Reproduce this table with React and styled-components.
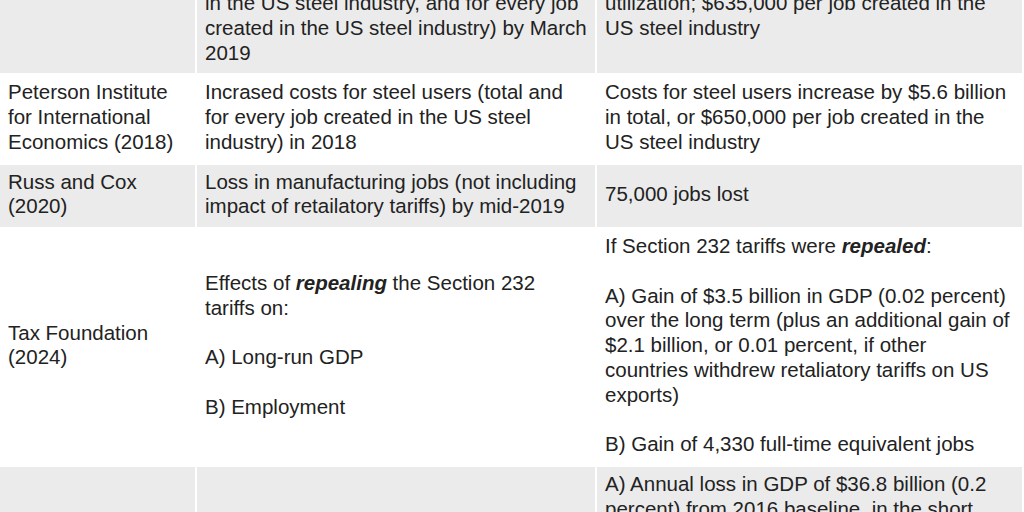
import React from "react";
import styled, { createGlobalStyle } from "styled-components";

const GlobalStyle = createGlobalStyle`
  html, body { margin: 0; padding: 0; background: #ffffff; }
  body { overflow: hidden; }
`;

const Viewport = styled.div`
  height: 512px;
  overflow: hidden;
`;

const Table = styled.div`
  display: grid;
  grid-template-columns: 195px 398px 425px;
  gap: 2px;
  width: 1022px;
  margin-top: ${(p) => p.$offset}px;
  font-family: "Liberation Sans", Arial, sans-serif;
  font-size: 20.5px;
  line-height: 24.75px;
  color: #222222;
`;

const Cell = styled.div`
  display: flex;
  flex-direction: column;
  justify-content: center;
  padding: 5px ${(p) => p.$padEnd}px 8px 8px;
  background: ${(p) => (p.$shaded ? "#ebebeb" : "#ffffff")};
`;

const Para = styled.p`
  margin: 0;
  & + & { margin-top: 24.75px; }
`;

const Stress = styled.em`
  font-weight: 700;
  font-style: italic;
`;

const rows = [
  {
    source: "Lincicome (2019)",
    measure: [
      <>
        Increase in costs for steel users (total, per ton of increased domestic capacity utilization achieved by US steel producers after the tariffs
        <br />
        in the US steel industry, and for every job created in the US steel industry) by March 2019
      </>,
    ],
    result: [
      "Costs for steel users increase by $9.4 billion in total, or $1,000 per ton of increased domestic capacity, measured in terms of utilization; $635,000 per job created in the US steel industry",
    ],
  },
  {
    source: "Peterson Institute for International Economics (2018)",
    measure: ["Incrased costs for steel users (total and for every job created in the US steel industry) in 2018"],
    result: ["Costs for steel users increase by $5.6 billion in total, or $650,000 per job created in the US steel industry"],
  },
  {
    source: "Russ and Cox (2020)",
    measure: ["Loss in manufacturing jobs (not including impact of retailatory tariffs) by mid-2019"],
    result: ["75,000 jobs lost"],
  },
  {
    source: "Tax Foundation (2024)",
    measure: [
      <>Effects of <Stress>repealing</Stress> the Section 232 tariffs on:</>,
      "A) Long-run GDP",
      "B) Employment",
    ],
    result: [
      <>If Section 232 tariffs were <Stress>repealed</Stress>:</>,
      "A) Gain of $3.5 billion in GDP (0.02 percent) over the long term (plus an additional gain of $2.1 billion, or 0.01 percent, if other countries withdrew retaliatory tariffs on US exports)",
      "B) Gain of 4,330 full-time equivalent jobs",
    ],
  },
  {
    source: "Trade Partnership Worldwide (2018)",
    measure: ["Effects of the Section 232 tariffs on:", "A) GDP", "B) Employment"],
    result: [
      "A) Annual loss in GDP of $36.8 billion (0.2 percent) from 2016 baseline, in the short term, after the tariffs were imposed",
      "B) Net loss of 145,918 jobs in the short term, after the tariffs were imposed",
      "C) Net loss of 26,280 jobs in the long term, compared with the 2016 baseline",
    ],
  },
];

const columnPadEnd = [8, 6, 8];

export default function App() {
  return (
    <>
      <GlobalStyle />
      <Viewport>
        <Table $offset={-113}>
          {rows.map((row, i) => {
            const shaded = i % 2 === 0;
            return (
              <React.Fragment key={i}>
                <Cell $shaded={shaded} $padEnd={columnPadEnd[0]}><Para>{row.source}</Para></Cell>
                <Cell $shaded={shaded} $padEnd={columnPadEnd[1]}>{row.measure.map((m, j) => <Para key={j}>{m}</Para>)}</Cell>
                <Cell $shaded={shaded} $padEnd={columnPadEnd[2]}>{row.result.map((m, j) => <Para key={j}>{m}</Para>)}</Cell>
              </React.Fragment>
            );
          })}
        </Table>
      </Viewport>
    </>
  );
}
